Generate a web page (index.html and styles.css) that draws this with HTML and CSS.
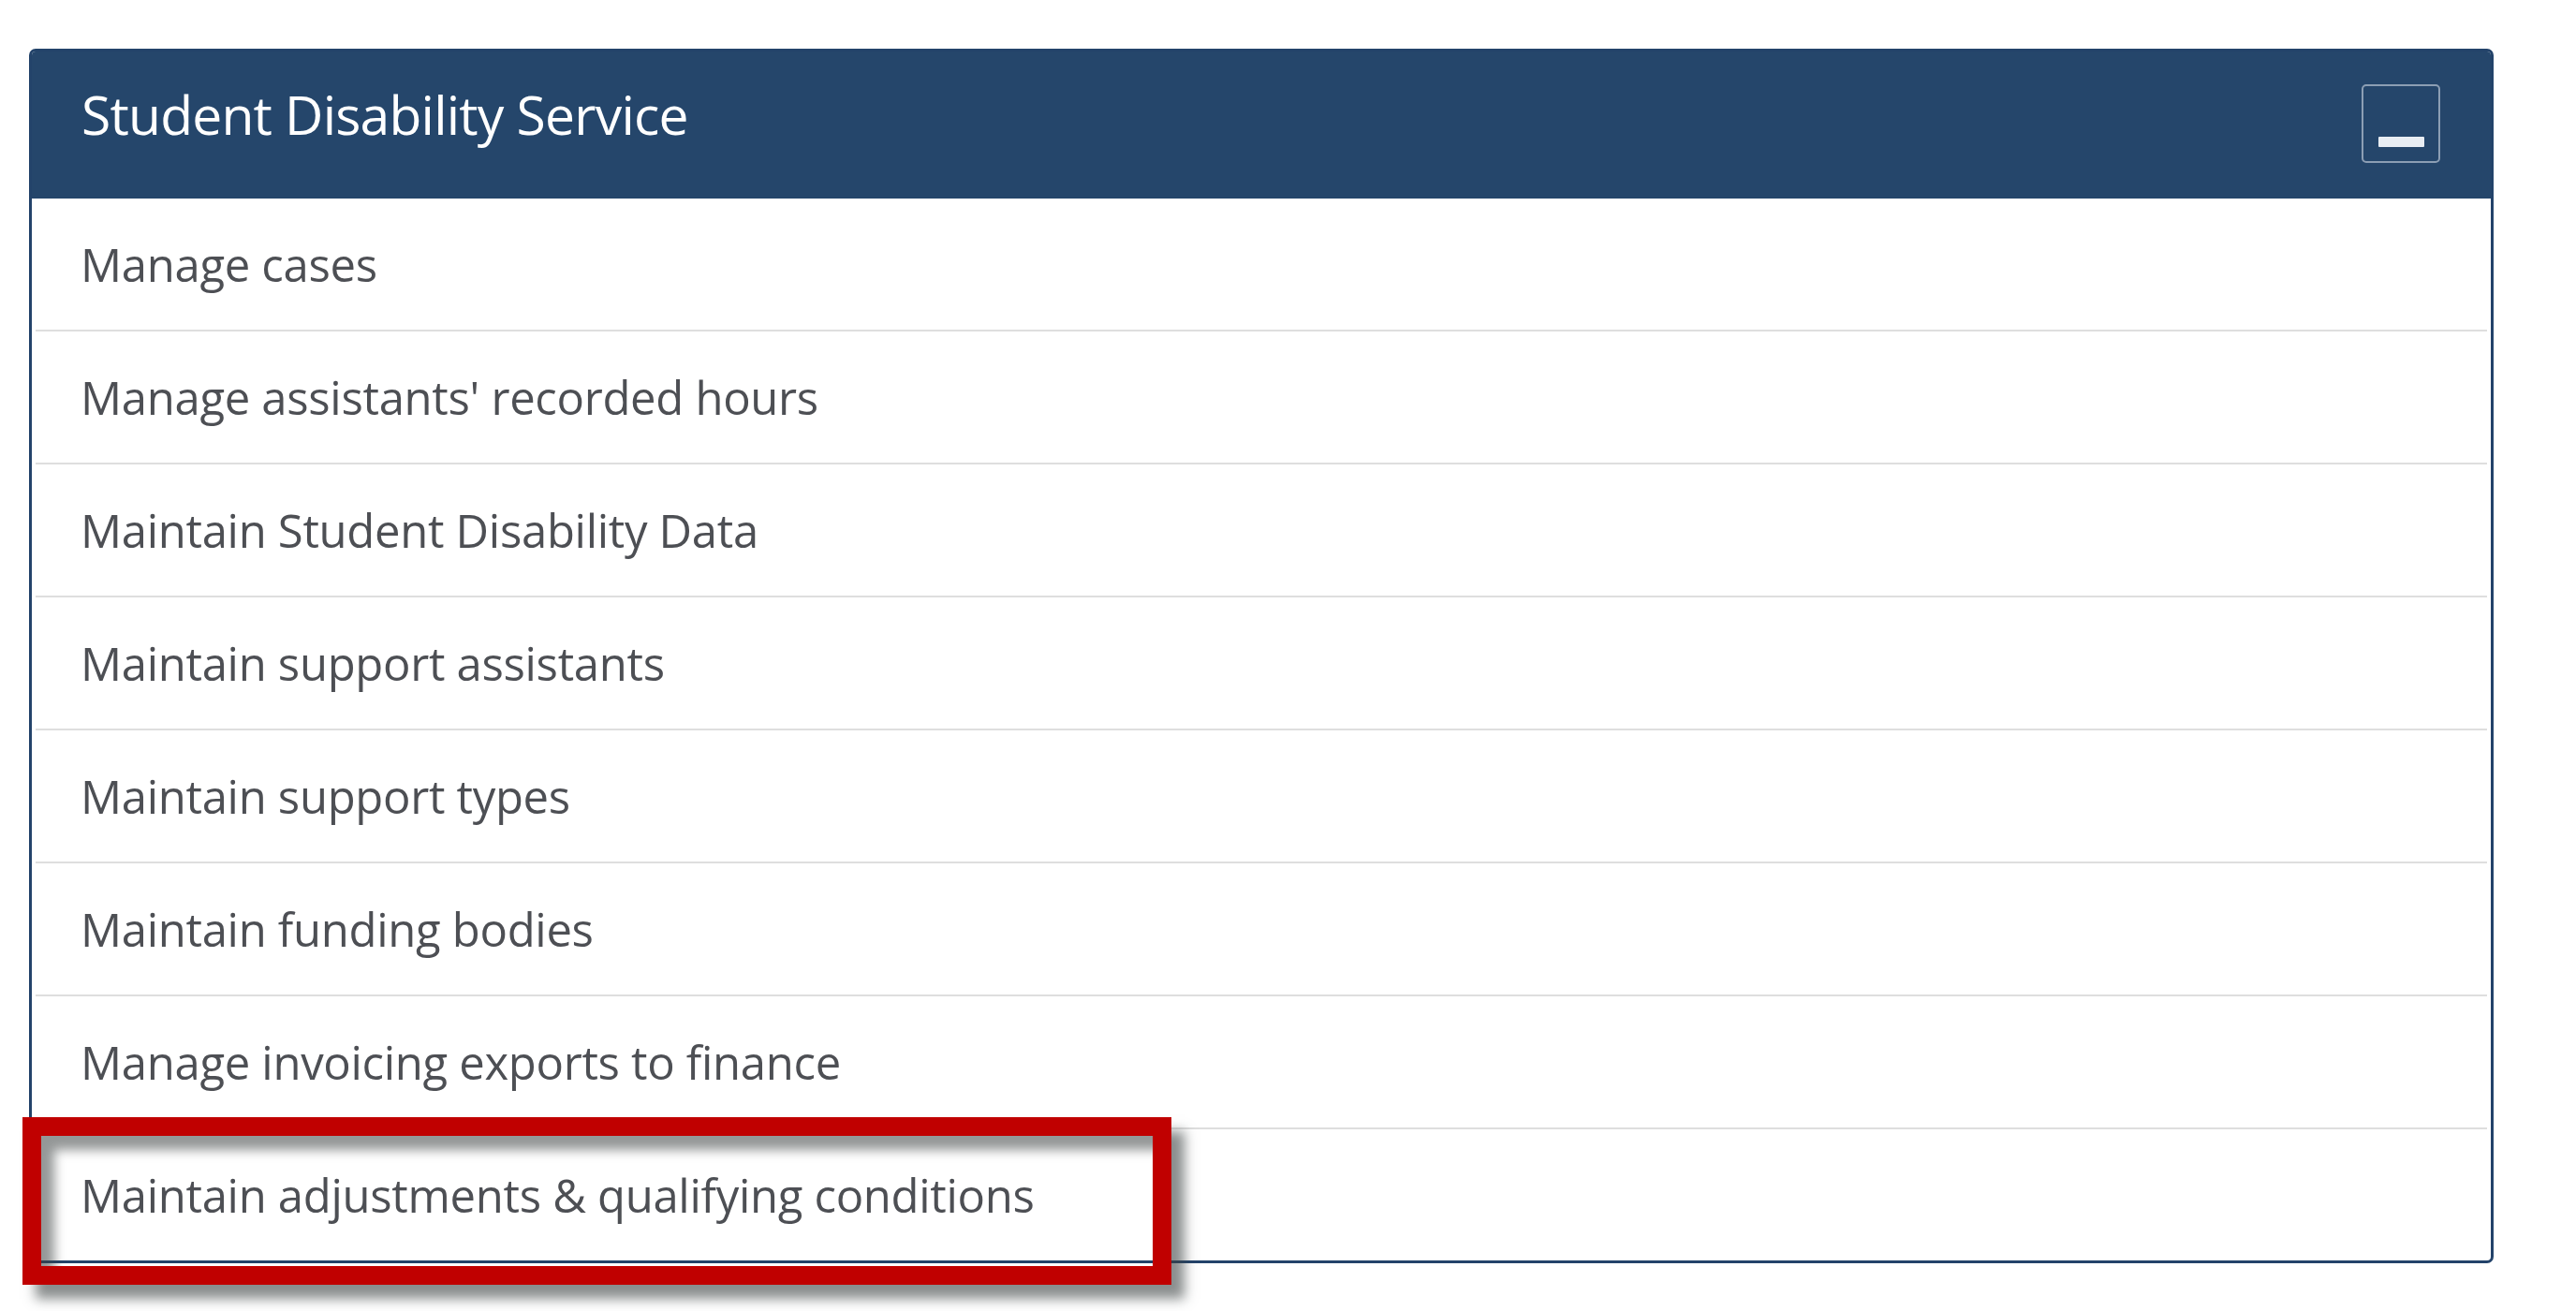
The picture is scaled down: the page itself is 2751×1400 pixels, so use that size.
FILE: index.html
```html
<!DOCTYPE html>
<html lang="en">
<head>
<meta charset="utf-8">
<title>Student Disability Service</title>
<link rel="stylesheet" href="styles.css">
</head>
<body>
<div class="page">
  <div class="panel">
    <div class="panel-heading">
      <h3 class="panel-title">Student Disability Service</h3>
      <button class="collapse-btn" aria-label="Collapse"><span class="dash"></span></button>
    </div>
    <ul class="list">
      <li class="item">Manage cases</li>
      <li class="item">Manage assistants' recorded hours</li>
      <li class="item">Maintain Student Disability Data</li>
      <li class="item">Maintain support assistants</li>
      <li class="item">Maintain support types</li>
      <li class="item">Maintain funding bodies</li>
      <li class="item">Manage invoicing exports to finance</li>
      <li class="item last">Maintain adjustments &amp; qualifying conditions</li>
    </ul>
  </div>
  <div class="highlight"></div>
</div>
</body>
</html>
```

FILE: styles.css
```css
html, body {
  margin: 0;
  padding: 0;
  background: #ffffff;
}

.page {
  position: relative;
  width: 2751px;
  height: 1400px;
  padding: 52px 0 0 31px;
  box-sizing: border-box;
  font-family: "Open Sans", "Noto Sans", sans-serif;
}

.panel {
  width: 2632px;
  box-sizing: border-box;
  border: 3px solid #23436a;
  border-radius: 7px;
  overflow: hidden;
  background: #ffffff;
}

.panel-heading {
  height: 157px;
  background: #25466b;
  display: flex;
  align-items: center;
  justify-content: space-between;
  padding: 0 54px 0 53px;
}

.panel-title {
  margin: 0 0 22px 0;
  font-weight: 400;
  font-size: 57px;
  letter-spacing: -0.8px;
  line-height: 1;
  color: #ffffff;
}

.collapse-btn {
  width: 84px;
  height: 84px;
  box-sizing: border-box;
  border: 2px solid rgba(225, 232, 240, 0.55);
  border-radius: 5px;
  background: transparent;
  padding: 0 0 15px 0;
  display: flex;
  flex-direction: column;
  justify-content: flex-end;
  align-items: center;
  margin-bottom: 4px;
}

.dash {
  display: block;
  width: 49px;
  height: 11px;
  background: #e8edf3;
  border-radius: 1px;
}

.list {
  list-style: none;
  margin: 0;
  padding: 0;
}

.item {
  height: 140px;
  margin: 0 4px;
  padding-left: 48px;
  display: flex;
  align-items: center;
  border-bottom: 2px solid #dedede;
  font-size: 49px;
  letter-spacing: -0.3px;
  color: #4d4f54;
}

.item.last {
  border-bottom: none;
}

.highlight {
  position: absolute;
  left: 24px;
  top: 1193px;
  width: 1227px;
  height: 179px;
  box-sizing: border-box;
  border: 20px solid #c00000;
  box-shadow: 14px 15px 12px rgba(60, 66, 66, 0.6), inset 14px 15px 12px rgba(60, 66, 66, 0.55);
}
```
